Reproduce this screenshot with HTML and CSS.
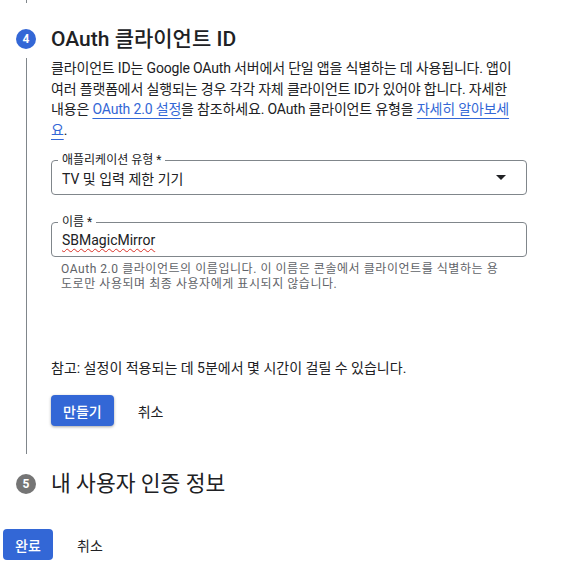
FILE: index.html
```html
<!DOCTYPE html>
<html lang="ko">
<head>
<meta charset="utf-8">
<link rel="stylesheet" href="styles.css">
</head>
<body>
<div class="rail-top"></div>
<section class="step">
  <div class="step-head">
    <div class="rail-cell"><span class="badge badge-active">4</span></div>
    <h2 class="step-title">OAuth 클라이언트 ID</h2>
  </div>
  <div class="step-body">
    <div class="rail-cell"><div class="rail-line"></div></div>
    <div class="content">
      <p class="desc">클라이언트 ID는 Google OAuth 서버에서 단일 앱을 식별하는 데 사용됩니다. 앱이 여러 플랫폼에서 실행되는 경우 각각 자체 클라이언트 ID가 있어야 합니다. 자세한 내용은 <a class="link">OAuth 2.0 설정</a>을 참조하세요. OAuth 클라이언트 유형을 <a class="link">자세히 알아보세요</a>.</p>

      <div class="field field-select">
        <span class="field-label">애플리케이션 유형 *</span>
        <span class="field-value">TV 및 입력 제한 기기</span>
        <svg class="caret" width="10" height="5" viewBox="0 0 10 5"><path d="M0 0h10L5 5z" fill="#202124"/></svg>
      </div>

      <div class="field field-name">
        <span class="field-label">이름 *</span>
        <span class="field-value spell">SBMagicMirror</span>
      </div>
      <p class="helper">OAuth 2.0 클라이언트의 이름입니다. 이 이름은 콘솔에서 클라이언트를 식별하는 용도로만 사용되며 최종 사용자에게 표시되지 않습니다.</p>

      <p class="note">참고: 설정이 적용되는 데 5분에서 몇 시간이 걸릴 수 있습니다.</p>
      <div class="actions">
        <button class="btn btn-primary btn-raised">만들기</button>
        <button class="btn btn-text">취소</button>
      </div>
    </div>
  </div>
</section>

<section class="step step-next">
  <div class="step-head">
    <div class="rail-cell"><span class="badge badge-idle">5</span></div>
    <h2 class="step-title step-title-idle">내 사용자 인증 정보</h2>
  </div>
</section>

<div class="footer">
  <button class="btn btn-primary btn-done">완료</button>
  <button class="btn btn-text">취소</button>
</div>
</body>
</html>
```

FILE: styles.css
```css
html, body {
  margin: 0;
  padding: 0;
  background: #ffffff;
}
body {
  font-family: Roboto, "Noto Sans CJK KR", sans-serif;
  color: #202124;
  width: 561px;
}
.rail-top {
  margin-left: 26px;
  width: 1px;
  height: 3px;
  background: #80868b;
}
.step-head {
  display: flex;
  align-items: center;
  height: 22px;
  margin-top: 25px;
}
.rail-cell {
  width: 51px;
  flex: none;
  display: flex;
  justify-content: center;
  padding-right: 2px;
  box-sizing: border-box;
}
.badge {
  width: 20px;
  height: 20px;
  border-radius: 50%;
  color: #fff;
  font-size: 12px;
  font-weight: 700;
  display: flex;
  align-items: center;
  justify-content: center;
  line-height: 1;
  margin-left: 3px;
}
.badge-active { background: #3367d6; }
.badge-idle { background: #757575; }
.step-title {
  margin: 0;
  font-size: 21px;
  font-weight: 500;
  line-height: 22px;
  color: #202124;
  white-space: nowrap;
}
.step-title-idle {
  font-weight: 400;
  font-size: 21.5px;
}
.step-body {
  display: flex;
  margin-top: 8px;
}
.step-body .rail-cell {
  justify-content: flex-start;
  padding: 0;
}
.rail-line {
  margin-left: 26px;
  width: 1px;
  background: #80868b;
  height: 100%;
}
.content {
  width: 476px;
  padding-bottom: 28px;
}
.desc {
  margin: 0;
  font-size: 14px;
  line-height: 20.5px;
  letter-spacing: -0.17px;
  width: 470px;
}
.link {
  color: #3367d6;
  text-decoration: underline;
  text-decoration-color: #3367d6;
  text-underline-offset: 4px;
}
.field {
  position: relative;
  border: 1px solid #80868b;
  border-radius: 4px;
  height: 33px;
  display: flex;
  align-items: center;
  padding: 0 10px;
  font-size: 14px;
}
.field-select {
  margin-top: 20px;
}
.field-name {
  margin-top: 27px;
}
.field-label {
  position: absolute;
  top: -9px;
  left: 6px;
  padding: 0 4px;
  background: #fff;
  font-size: 12px;
  line-height: 16px;
  color: #202124;
}
.field-value {
  flex: 1;
}
.spell {
  text-decoration: underline wavy #d93025;
  text-decoration-thickness: 1px;
  text-underline-offset: 3px;
}
.caret {
  margin-right: 10px;
}
.helper {
  margin: 5px 0 0;
  padding-left: 10px;
  font-size: 12px;
  line-height: 15px;
  letter-spacing: 0.55px;
  color: #5f6368;
  width: 442px;
}
.note {
  margin: 66px 0 0;
  font-size: 14px;
  line-height: 20px;
}
.actions {
  display: flex;
  align-items: center;
  gap: 24px;
  margin-top: 17px;
}
.btn {
  font-family: Roboto, "Noto Sans CJK KR", sans-serif;
  font-size: 14px;
  border: none;
  background: none;
  padding: 0;
  cursor: pointer;
  color: #202124;
}
.btn-primary {
  background: #3367d6;
  color: #fff;
  border-radius: 4px;
  height: 31px;
  padding: 0 12px;
  font-weight: 500;
}
.btn-raised {
  box-shadow: 0 1px 3px rgba(0,0,0,0.35);
}
.btn-text {
  padding: 0;
}
.step-next .step-head {
  margin-top: 19px;
}
.footer {
  display: flex;
  align-items: center;
  gap: 24px;
  margin-top: 34px;
  margin-left: 3px;
}
.btn-done {
  width: 50px;
  padding: 0;
}
```
